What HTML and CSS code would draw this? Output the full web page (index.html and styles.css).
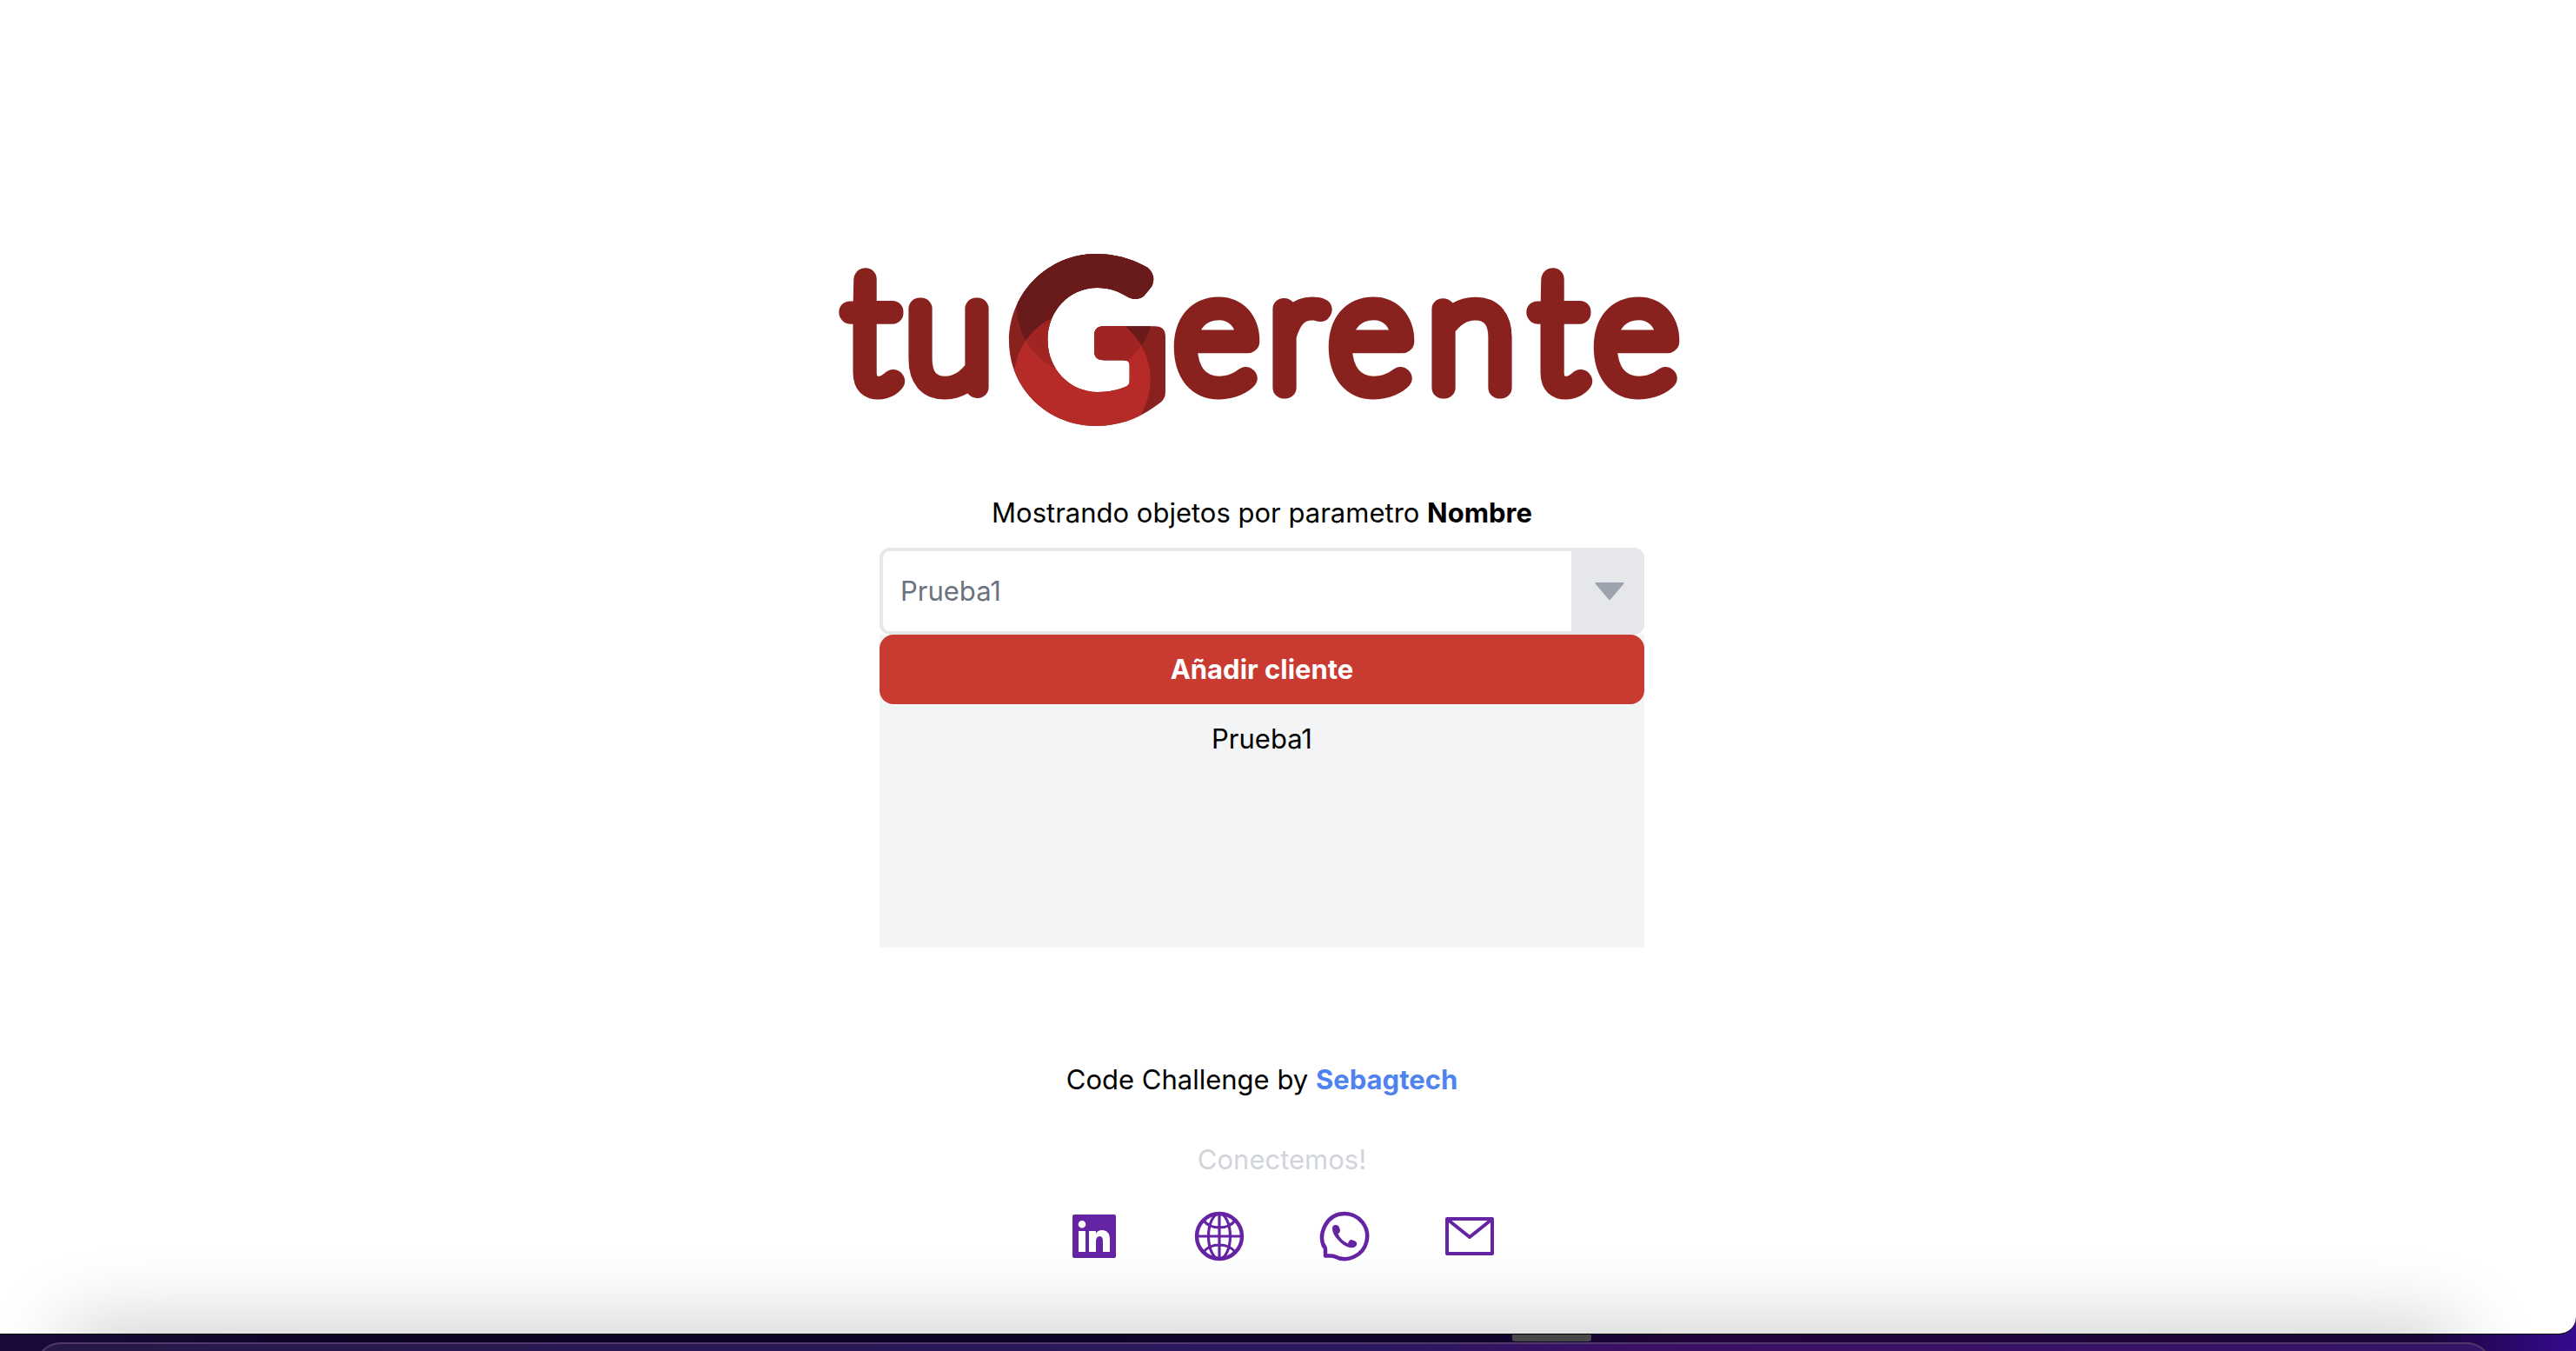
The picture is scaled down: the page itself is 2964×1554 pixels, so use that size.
FILE: index.html
```html
<!DOCTYPE html>
<html lang="es">
<head>
<meta charset="utf-8">
<title>tuGerente</title>
<link rel="stylesheet" href="styles.css">
</head>
<body>
<div class="window">
  <main class="content">
    <svg class="logo" viewBox="0 0 976 198" role="img" aria-label="tuGerente">
      <defs>
        <path id="g-shape" d="M1112 83C1060 55 1000 36 932 36C770 36 633 170 633 336C633 500 765 630 935 630C1020 630 1090 600 1155 550Q1173 535 1173 513V322Q1173 286 1137 286H960Q927 286 927 320V370Q927 403 960 403H1030Q1049 403 1049 421V475Q1049 490 1034 495C1005 507 975 513 940 513C845 513 766 435 766 333C766 235 840 153 938 153C980 153 1012 165 1045 186Q1075 200 1098 182L1127 147Q1142 110 1112 83Z"/>
        <clipPath id="g-clip"><use href="#g-shape"/></clipPath>
        <clipPath id="upper-clip"><circle cx="896" cy="219" r="236"/></clipPath>
      </defs>
      <text class="wordmark" x="8 78" y="154">tu</text>
      <g transform="scale(.3333) translate(-42 -36)">
        <use href="#g-shape" fill="#89221f"/>
        <g clip-path="url(#g-clip)">
          <path d="M600 0H1200V205H600Z" fill="#691a1a"/>
          <circle cx="896" cy="219" r="236" fill="#691a1a"/>
          <circle cx="885" cy="470" r="236" fill="#b62a28"/>
          <g clip-path="url(#upper-clip)"><circle cx="885" cy="470" r="236" fill="#9f2422"/></g>
        </g>
      </g>
      <text class="wordmark" x="388 496 566 679 799 871" y="154">erente</text>
    </svg>

    <p class="caption">Mostrando objetos por parametro <strong>Nombre</strong></p>

    <section class="panel">
      <div class="combo">
        <input class="combo-input" type="text" placeholder="Prueba1" aria-label="Nombre">
        <button class="combo-toggle" type="button" aria-label="Desplegar">
          <svg class="arrow" viewBox="0 0 34 20"><path d="M1 0H33Q34 1 33 2L18 19.5Q17 20.500 16 19.500L1 2Q0 1 1 0Z" fill="#9ca3af"/></svg>
        </button>
      </div>
      <button class="add" type="button">Añadir cliente</button>
      <ul class="list"><li>Prueba1</li></ul>
    </section>

    <footer class="footer">
      <p>Code Challenge by <a class="author" href="#">Sebagtech</a></p>
      <div class="connect">
        <p class="connect-title">Conectemos!</p>
        <nav class="social">
          <a href="#" aria-label="LinkedIn"><svg class="icon" viewBox="0 0 64 64"><path fill="#6424a4" fill-rule="evenodd" d="M9 7H55Q57 7 57 9V55Q57 57 55 57H9Q7 57 7 55V9Q7 7 9 7ZM14 26V50H22V26ZM18 14A4.300 4.300 0 1 0 18 22.600A4.300 4.300 0 1 0 18 14ZM26 26V50H34V38Q34 32 38.500 32Q42 32 42 38V50H50V36Q50 25 41 25Q36 25 34 29V26Z"/></svg></a>
          <a href="#" aria-label="Sitio web"><svg class="icon" viewBox="0 0 64 64" fill="none" stroke="#6424a4" stroke-width="3.200"><circle cx="32" cy="32" r="26" stroke-width="4.400"/><ellipse cx="32" cy="32" rx="12.500" ry="26"/><path d="M32 6V58M6 32H58M14 14Q20 22 32 22Q44 22 50 14M14 50Q20 42 32 42Q44 42 50 50"/></svg></a>
          <a href="#" aria-label="WhatsApp"><svg class="icon" viewBox="0 0 64 64"><path d="M8 43.500C2 29 11 6 32 6A26 26 0 1 1 20 55Q18 54.500 16 54.500H10V47Q10 45 8 42Z" fill="none" stroke="#6424a4" stroke-width="4.500" stroke-linejoin="round"/><path fill="#6424a4" d="M18 23Q18 19 22 19Q25 19 26 22L27 25Q27 28 24.500 29Q28 37 36 40.500Q37 36 40 36L44 37.500Q47 39 46 42Q44 46 38 45Q30 43 23.500 35Q18 29 18 23Z"/></svg></a>
          <a href="#" aria-label="Correo"><svg class="icon" viewBox="0 0 64 64" fill="none" stroke="#6424a4" stroke-width="4" stroke-linejoin="round"><path d="M6 12H58V52H6ZM7 13L32 33L57 13"/></svg></a>
        </nav>
      </div>
    </footer>
  </main>
</div>
<div class="desktop"><div class="tile"></div><div class="dock"></div></div>
</body>
</html>
```
FILE: styles.css
```css
* { box-sizing: border-box; }

body {
  margin: 0;
  min-height: 100vh;
  display: flex;
  flex-direction: column;
  overflow: hidden;
  background: linear-gradient(90deg, #1a0a3c, #0b0420 15%, #10042c 58%, #21043c 66%, #1a0538 94%, #350a90);
  color: #000;
  font: 31px/48px Inter, "Liberation Sans", sans-serif;
}

p, ul { margin: 0; padding: 0; list-style: none; }
button, input { font: inherit; border: 0; }

.window {
  position: relative;
  flex: 1;
  background: #fff;
  border-bottom: 1px solid #000;
  border-radius: 0 0 20px 0;
  overflow: hidden;
}

/* soft shadow cast by the dock onto the window's lower edge */
.window::after {
  content: "";
  position: absolute;
  left: 76px;
  right: 136px;
  top: 100%;
  height: 60px;
  border-radius: 32px;
  box-shadow: 0 0 90px 8px rgba(0, 0, 0, .22);
  pointer-events: none;
}

.content {
  display: flex;
  flex-direction: column;
  align-items: center;
  padding: 292px 60px 0 0;
}

.logo { width: 976px; height: 198px; overflow: visible; }

.wordmark {
  font: 100 184px Lato, sans-serif;
  fill: #89221f;
  stroke: #89221f;
  stroke-width: 25px;
  stroke-linejoin: round;
}

.caption { margin: 76px 0 16px; }

.panel { width: 880px; min-height: 460px; background: linear-gradient(#fff 100px, #f3f4f6 100px); }

.combo {
  display: flex;
  height: 100px;
  border: 4px solid #e5e7eb;
  border-radius: 12px;
  background: #e5e7eb;
}

.combo-input {
  flex: 1;
  min-width: 0;
  padding: 0 20px;
  border-radius: 8px 0 0 8px;
  background: #fff;
}

.combo-input::placeholder { color: #6b7280; opacity: 1; }

.combo-toggle {
  width: 80px;
  padding: 0 0 0 8px;
  background: #e5e7eb;
  display: grid;
  place-items: center;
}

.arrow { width: 34px; height: 20px; }

.add {
  display: block;
  width: 100%;
  height: 80px;
  border-radius: 16px;
  background: #c93a31;
  color: #fff;
  font-weight: 700;
}

.list { padding: 16px; text-align: center; }

.footer { margin-top: 128px; text-align: center; }
.author { color: #4f83f0; font-weight: 700; text-decoration: none; }
.connect { margin-top: 44px; padding-left: 46px; }
.connect-title { color: #d1d5db; }
.social { display: flex; justify-content: center; gap: 80px; margin-top: 32px; }
.icon { display: block; width: 64px; height: 64px; }

.desktop {
  display: flex;
  flex-direction: column;
  height: 19px;
  padding: 0 96px 0 40px;
  overflow: hidden;
}

.tile {
  flex: none;
  width: 91px;
  height: 8px;
  margin-left: 1700px;
  background: #484848;
  border-radius: 0 0 3px 3px;
}

.dock {
  flex: none;
  height: 60px;
  margin-top: 1px;
  border: 2px solid #50386c;
  border-radius: 32px;
  background: linear-gradient(90deg, #281848, #2c1860 55%, #3c1064 65%, #341468);
}
```
